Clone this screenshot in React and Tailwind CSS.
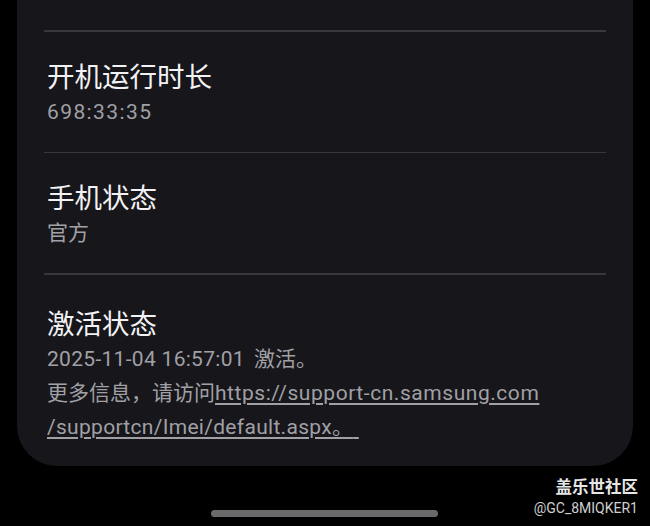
import React from "react";

const font = { fontFamily: 'Roboto, "Noto Sans CJK SC", sans-serif' };

function Row({ title, children, pt = "pt-[29px]", pb = "pb-[23px]" }) {
  return (
    <div>
      <div className="h-[1.5px] bg-[#37373c]" />
      <div className={`${pt} ${pb} pl-[3px]`}>
        <div className="text-[27.5px] leading-[34px] text-[#f2f2f4]">{title}</div>
        <div className="text-[21px] leading-[34px] text-[#a0a0a5]">{children}</div>
      </div>
    </div>
  );
}

export default function App() {
  return (
    <div className="w-[650px] h-[526px] bg-black overflow-hidden" style={font}>
      <div className="mx-[17px] w-[616px] bg-[#17161b] rounded-b-[40px] px-[27px] pt-[30px] pb-[22px]">
        <Row title="开机运行时长">
          <span className="tracking-[1.4px]">698:33:35</span>
        </Row>
        <Row title="手机状态">官方</Row>
        <Row title="激活状态" pt="pt-[33px]" pb="pb-0">
          <div className="leading-[34px]">
            <span className="tracking-[0.3px]">2025-11-04 16:57:01</span>
            <span className="ml-[9px]">激活。</span>
          </div>
          <div className="leading-[34px]">
            更多信息，请访问
            <span className="underline decoration-[1.5px] underline-offset-[3px] tracking-[0.55px]">
              https://support-cn.samsung.com
            </span>
            <br />
            <span className="underline decoration-[1.5px] underline-offset-[3px] tracking-[0.3px]">
              /supportcn/Imei/default.aspx。{"\u00a0"}
            </span>
          </div>
        </Row>
      </div>
      <div className="relative h-[61px] pr-[12px] pt-[11px] flex flex-col items-end">
        <div className="text-[16.5px] leading-[22px] font-bold text-[#e6e6e6]">盖乐世社区</div>
        <div className="text-[14px] leading-[18px] text-[#d0d0d0]">@GC_8MIQKER1</div>
        <div className="absolute left-[211px] top-[44px] w-[227px] h-[7px] rounded-full bg-[#6a6a6c]" />
      </div>
    </div>
  );
}
